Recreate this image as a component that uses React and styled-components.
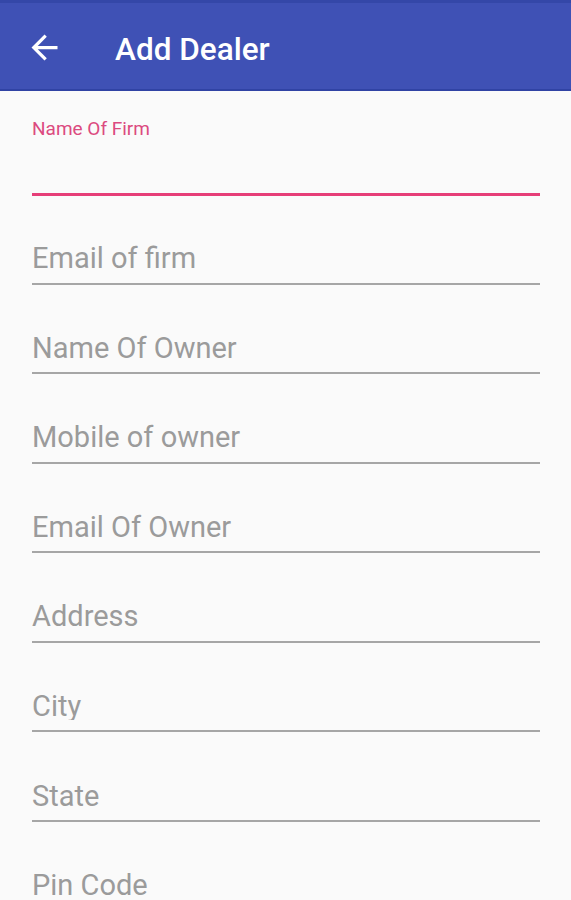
import React from "react";
import styled, { createGlobalStyle } from "styled-components";

const GlobalStyle = createGlobalStyle`
  html, body {
    margin: 0;
    padding: 0;
    background: #fafafa;
    overflow: hidden;
  }
  body {
    font-family: Roboto, "Noto Sans", "Liberation Sans", sans-serif;
  }
  * { box-sizing: border-box; }
`;

const Screen = styled.div`
  display: flex;
  flex-direction: column;
  min-height: 900px;
  background: #fafafa;
`;

const AppBar = styled.header`
  display: flex;
  align-items: center;
  height: 91px;
  border-top: 3px solid #3447a8;
  border-bottom: 2px solid #3043a4;
  background: #3f51b5;
  padding-left: 25px;
`;

const IconButton = styled.button`
  display: flex;
  align-items: center;
  justify-content: center;
  width: 39px;
  height: 39px;
  padding: 0;
  margin: 2px 0 0 0;
  border: none;
  background: transparent;
  color: #ffffff;
`;

const Title = styled.h1`
  margin: 0 0 0 51px;
  padding-top: 7px;
  font-family: Roboto, "Noto Sans", sans-serif;
  font-size: 31.5px;
  line-height: 1;
  font-weight: 500;
  color: #ffffff;
`;

const Form = styled.form`
  display: flex;
  flex-direction: column;
  padding: 0 31px 0 32px;
`;

const Field = styled.div`
  display: flex;
  flex-direction: column;
  justify-content: flex-end;
  height: ${(p) => p.$height}px;
  border-bottom: ${(p) => (p.$focused ? "3px solid #e63e78" : "2px solid #a6a6a6")};
  flex-shrink: 0;
`;

const FloatLabel = styled.label`
  font-size: 19px;
  line-height: 1;
  color: #dc4a80;
  margin-bottom: 17px;
`;

const Input = styled.input`
  display: block;
  width: 100%;
  height: 29px;
  margin: 0 0 ${(p) => (p.$focused ? 9 : 10)}px 0;
  padding: 0;
  border: none;
  outline: none;
  background: transparent;
  font-family: Roboto, "Noto Sans", sans-serif;
  font-size: 29px;
  line-height: 1;
  color: #333;
  &::placeholder {
    color: #9b9b9b;
    opacity: 1;
  }
`;

const ArrowBack = () => (
  <svg width="39" height="39" viewBox="0 0 24 24" fill="currentColor">
    <path d="M20 11H7.83l5.59-5.59L12 4l-8 8 8 8 1.41-1.41L7.83 13H20v-2z" />
  </svg>
);

const fields = [
  "Email of firm",
  "Name Of Owner",
  "Mobile of owner",
  "Email Of Owner",
  "Address",
  "City",
  "State",
  "Pin Code",
];

export default function App() {
  return (
    <>
      <GlobalStyle />
      <Screen>
        <AppBar>
          <IconButton type="button" aria-label="Back">
            <ArrowBack />
          </IconButton>
          <Title>Add Dealer</Title>
        </AppBar>
        <Form onSubmit={(e) => e.preventDefault()}>
          <Field $height={104.5} $focused>
            <FloatLabel htmlFor="firm">Name Of Firm</FloatLabel>
            <Input id="firm" $focused />
          </Field>
          {fields.map((f, i) => (
            <Field key={f} $height={i === 0 ? 89 : 89.6}>
              <Input placeholder={f} />
            </Field>
          ))}
        </Form>
      </Screen>
    </>
  );
}
